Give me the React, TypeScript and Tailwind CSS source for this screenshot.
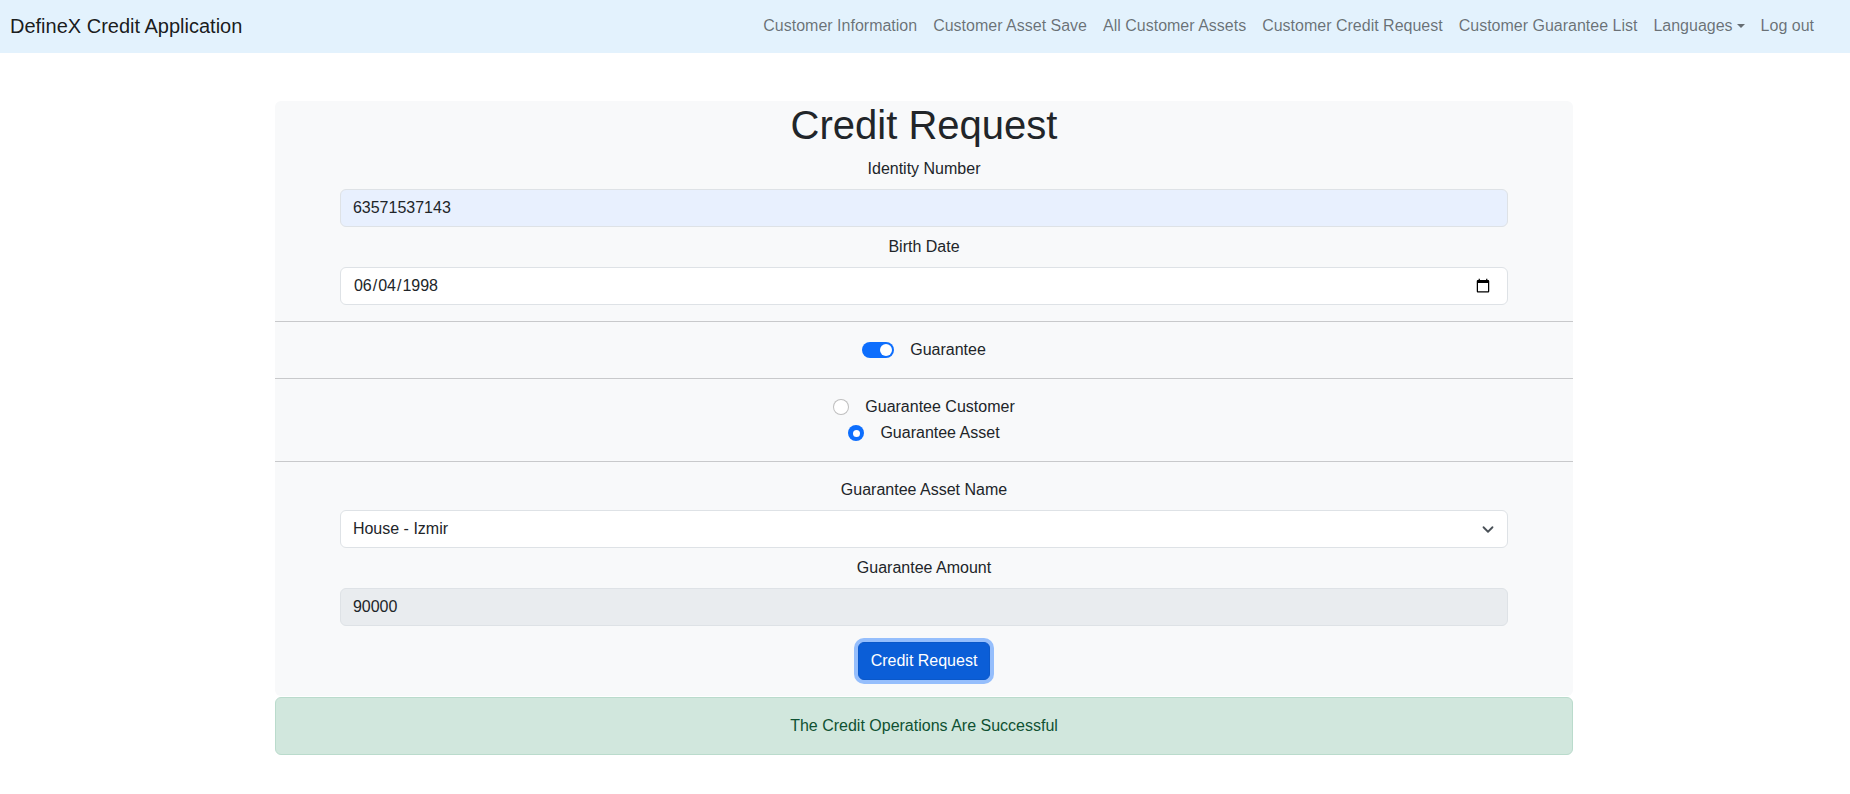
import React from 'react';

const navLinks = [
  'Customer Information',
  'Customer Asset Save',
  'All Customer Assets',
  'Customer Credit Request',
  'Customer Guarantee List',
];

function Navbar() {
  return (
    <nav className="h-[53px] bg-[#e3f2fd] flex items-center justify-between pl-[10px] pr-[28px] pb-[2px]">
      <span className="text-[20px] leading-[30px] text-[rgba(0,0,0,0.9)]">DefineX Credit Application</span>
      <div className="flex items-center">
        {navLinks.map((l) => (
          <a key={l} className="px-2 leading-6 text-[rgba(0,0,0,0.55)]">
            {l}
          </a>
        ))}
        <a className="px-2 leading-6 text-[rgba(0,0,0,0.55)] flex items-center">
          Languages
          <span className="ml-[4px] w-0 h-0 border-t-[4px] border-t-[rgba(0,0,0,0.55)] border-x-[4px] border-x-transparent" />
        </a>
        <a className="px-2 leading-6 text-[rgba(0,0,0,0.55)]">Log out</a>
      </div>
    </nav>
  );
}

function Label({ children }: { children: React.ReactNode }) {
  return <label className="block text-center leading-6 mb-2 text-[#212529]">{children}</label>;
}

const inputCls =
  'block w-[90%] mx-auto h-[38px] px-3 rounded-md border border-[#dee2e6] text-[#212529] leading-6 outline-none';

function Divider() {
  return <hr className="my-4 border-0 border-t border-[#c8c9cb]" />;
}

export default function App() {
  return (
    <div className="min-h-screen bg-white text-[16px]" style={{ fontFamily: '"Liberation Sans", Arial, sans-serif' }}>
      <Navbar />

      <div className="w-[1298px] ml-[275px] mt-[48px]">
        <div className="bg-[#f8f9fa] rounded-md pb-4">
          <h1 className="text-[40px] leading-[48px] text-center text-[#212529] mb-2">Credit Request</h1>

          <Label>Identity Number</Label>
          <input className={`${inputCls} bg-[#e8f0fe]`} defaultValue="63571537143" />

          <div className="mt-2">
            <Label>Birth Date</Label>
            <input type="date" className={`${inputCls} bg-white pr-[14px]`} defaultValue="1998-06-04" />
          </div>

          <Divider />

          {/* guarantee switch */}
          <div className="flex items-center justify-center gap-[16px] h-6 mb-[2px]">
            <span className="relative w-8 h-4 rounded-full bg-[#0d6efd]">
              <span className="absolute right-[2px] top-[2px] w-3 h-3 rounded-full bg-white" />
            </span>
            <span className="text-[#212529]">Guarantee</span>
          </div>

          <Divider />

          {/* guarantee type */}
          <div className="flex flex-col items-center gap-[2px]">
            <div className="flex items-center gap-[16px] h-6">
              <span className="w-4 h-4 rounded-full bg-white border border-[rgba(0,0,0,0.25)]" />
              <span className="text-[#212529]">Guarantee Customer</span>
            </div>
            <div className="flex items-center gap-[16px] h-6">
              <span className="w-4 h-4 rounded-full bg-[#0d6efd] flex items-center justify-center">
                <span className="w-[7px] h-[7px] rounded-full bg-white" />
              </span>
              <span className="text-[#212529]">Guarantee Asset</span>
            </div>
          </div>

          <Divider />

          <Label>Guarantee Asset Name</Label>
          <div className="relative w-[90%] mx-auto">
            <select className="block w-full h-[38px] pl-3 pr-9 rounded-md border border-[#dee2e6] bg-white text-[#212529] leading-6 appearance-none outline-none">
              <option>House - Izmir</option>
            </select>
            <svg className="absolute right-[14px] top-[15px] pointer-events-none" width="12" height="9" viewBox="0 2 16 12">
              <path d="m2 5 6 6 6-6" fill="none" stroke="#495057" strokeWidth="2.4" strokeLinecap="round" strokeLinejoin="round" />
            </svg>
          </div>

          <div className="mt-2">
            <Label>Guarantee Amount</Label>
            <input className={`${inputCls} bg-[#e9ecef]`} defaultValue="90000" disabled />
          </div>

          <div className="flex justify-center mt-4">
            <button className="h-[38px] px-3 rounded-md bg-[#0b5ed7] border border-[#0a58ca] text-white leading-6 shadow-[0_0_0_4px_rgba(49,132,253,0.5)]">
              Credit Request
            </button>
          </div>
        </div>

        <div className="mt-px px-4 py-4 rounded-md border border-[#badbcc] bg-[#d1e7dd] text-[#0f5132] text-center leading-6">
          The Credit Operations Are Successful
        </div>
      </div>
    </div>
  );
}
